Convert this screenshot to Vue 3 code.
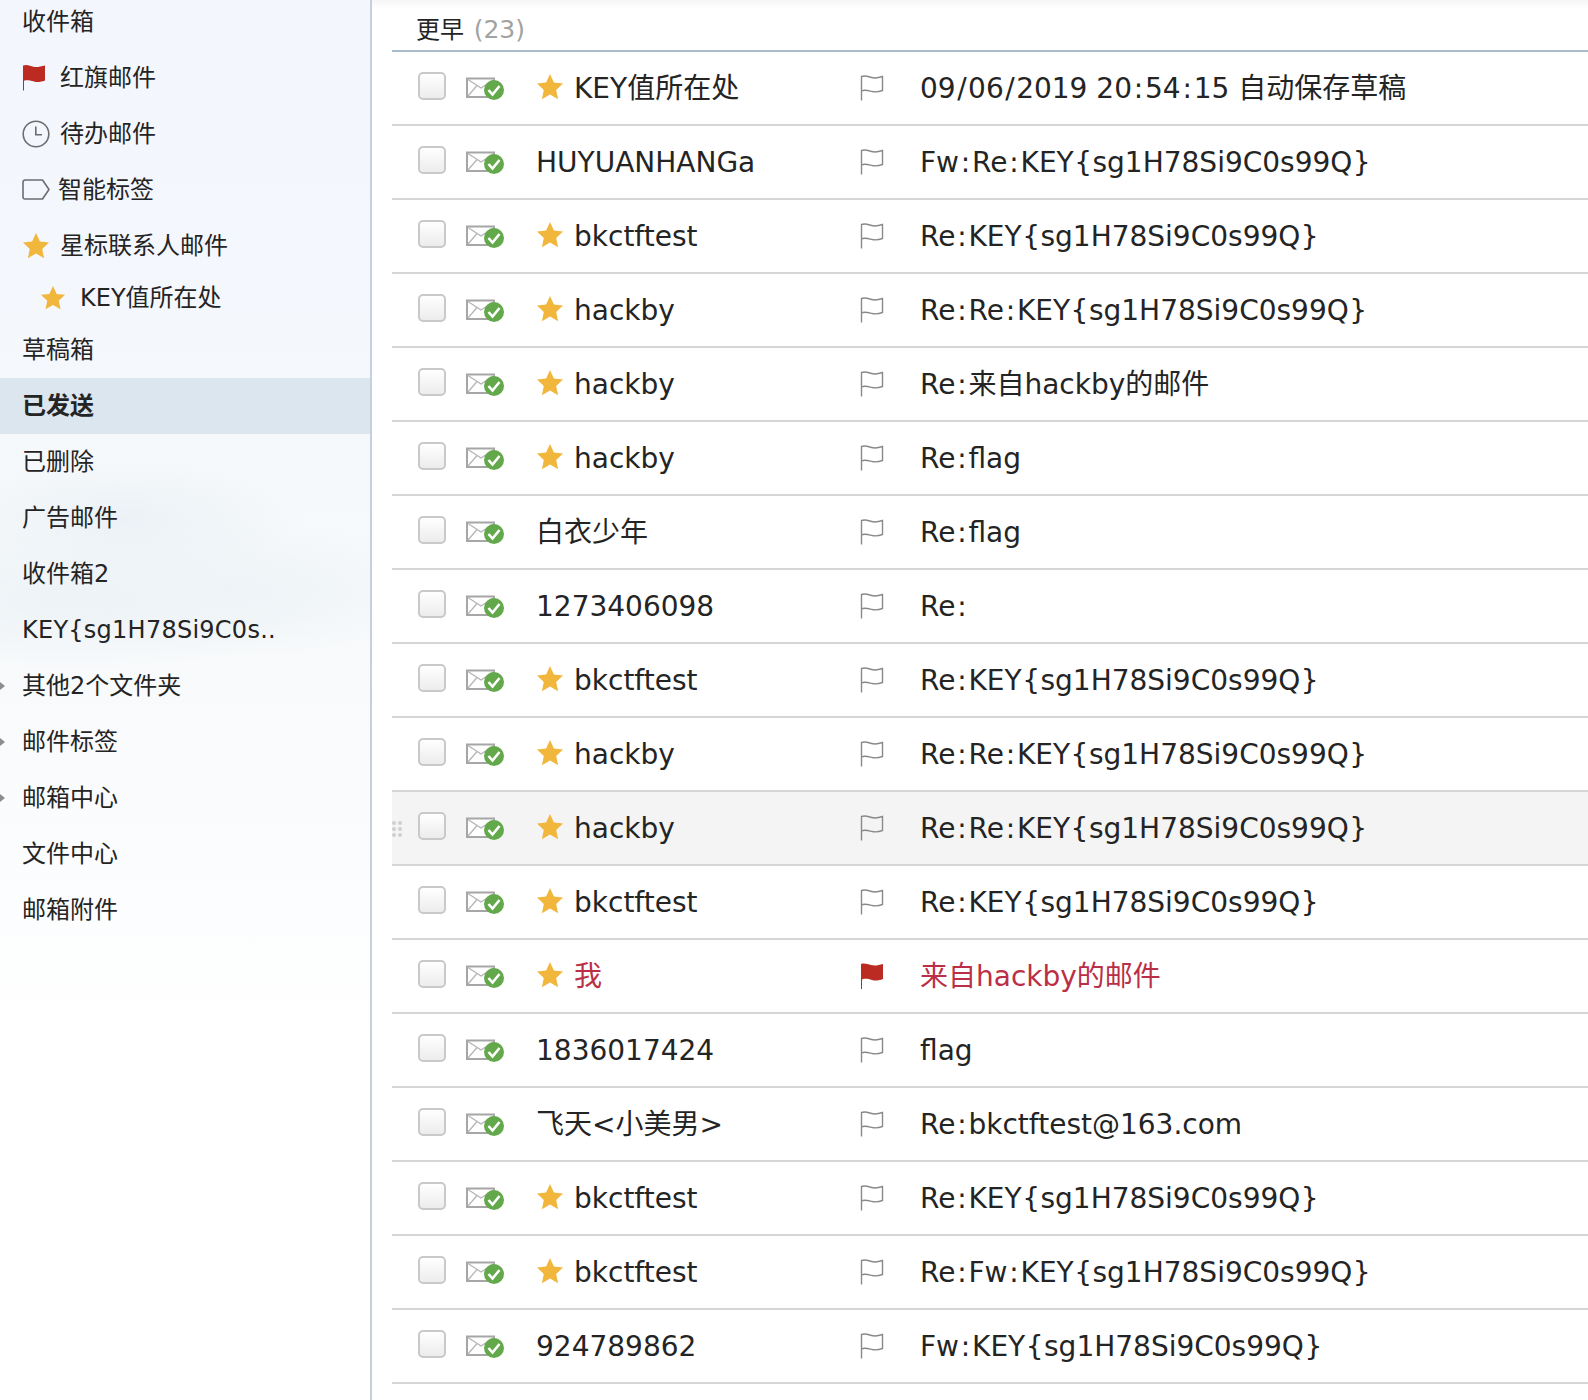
<script setup>
const S = 'Re:KEY{sg1H78Si9C0s99Q}'
const RR = 'Re:Re:KEY{sg1H78Si9C0s99Q}'
const folders = [
  { t: '收件箱' },
  { t: '红旗邮件', icon: 'flag' },
  { t: '待办邮件', icon: 'clock' },
  { t: '智能标签', icon: 'tag' },
  { t: '星标联系人邮件', icon: 'star' },
  { t: 'KEY值所在处', icon: 'star', child: true },
  { t: '草稿箱' },
  { t: '已发送', active: true },
  { t: '已删除' },
  { t: '广告邮件' },
  { t: '收件箱2' },
  { t: 'KEY{sg1H78Si9C0s..', wide: true },
  { t: '其他2个文件夹', arrow: true },
  { t: '邮件标签', arrow: true },
  { t: '邮箱中心', arrow: true },
  { t: '文件中心' },
  { t: '邮箱附件' }
]
const mails = [
  { n: 'KEY值所在处', s: '09/06/2019 20:54:15 自动保存草稿', star: true },
  { n: 'HUYUANHANGa', s: 'Fw:' + S },
  { n: 'bkctftest', s: S, star: true },
  { n: 'hackby', s: RR, star: true },
  { n: 'hackby', s: 'Re:来自hackby的邮件', star: true },
  { n: 'hackby', s: 'Re:flag', star: true },
  { n: '白衣少年', s: 'Re:flag' },
  { n: '1273406098', s: 'Re:' },
  { n: 'bkctftest', s: S, star: true },
  { n: 'hackby', s: RR, star: true },
  { n: 'hackby', s: RR, star: true, hover: true },
  { n: 'bkctftest', s: S, star: true },
  { n: '我', s: '来自hackby的邮件', star: true, red: true },
  { n: '1836017424', s: 'flag' },
  { n: '飞天<小美男>', s: 'Re:bkctftest@163.com' },
  { n: 'bkctftest', s: S, star: true },
  { n: 'bkctftest', s: 'Re:Fw:KEY{sg1H78Si9C0s99Q}', star: true },
  { n: '924789862', s: 'Fw:KEY{sg1H78Si9C0s99Q}' }
]
const parts = s => s.split(/([:{}\/])/).filter(Boolean)
const punctClass = p => ({ ':': 'colon', '{': 'brace', '}': 'brace', '/': 'slash' }[p])
const starPath = 'M14 1l3.900 8.600 9.100 1-6.800 6.300 1.900 9.300L14 21.500 5.900 26.200l1.900-9.300L1 10.600l9.100-1z'
</script>

<template>
  <div class="page">
    <aside class="side">
      <div
        v-for="f in folders"
        :key="f.t"
        class="folder"
        :class="{ active: f.active, child: f.child, tagged: f.icon === 'tag', wide: f.wide }"
      >
        <i v-if="f.arrow" class="arrow"></i>
        <svg v-if="f.icon === 'flag'" class="ficon" viewBox="0 0 28 28">
          <path d="M1 1.500c4-1.500 7 .2 10.500 1.200 3.500 1 6.500 0 11.500-1.200v15c-4 1.500-7.500 2-11 1-3-.9-6.500-1.800-10-.8v9.800H1z" fill="#bb2b22"/>
        </svg>
        <svg v-else-if="f.icon === 'clock'" class="ficon" viewBox="0 0 28 28">
          <circle cx="14" cy="14" r="12.800" fill="none" stroke="#6d6d70" stroke-width="1.600"/>
          <path d="M13.800 6.500v8.300h6.200" fill="none" stroke="#6d6d70" stroke-width="1.600"/>
        </svg>
        <svg v-else-if="f.icon === 'tag'" class="ficon" viewBox="0 0 28 28">
          <path d="M3 4.500h17.500l6.500 9.500-6.500 9.500H3a2 2 0 0 1-2-2v-15a2 2 0 0 1 2-2z" fill="none" stroke="#6d6d70" stroke-width="1.600" stroke-linejoin="round" transform="translate(0 -.5)"/>
        </svg>
        <svg v-else-if="f.icon === 'star'" class="ficon" viewBox="0 0 28 28">
          <path :d="starPath" fill="#f0b73c"/>
        </svg>
        <span class="ftext">{{ f.t }}</span>
      </div>
    </aside>

    <main class="main">
      <div class="group">更早 <em>(23)</em></div>
      <div v-for="(m, i) in mails" :key="i" class="row" :class="{ hover: m.hover, red: m.red }">
        <div v-if="m.hover" class="grip"><b v-for="d in 6" :key="d"></b></div>
        <div class="check"></div>
        <svg class="mailicon" viewBox="0 0 38 24">
          <path d="M1 2.500h27v18.500H1z" fill="#fff" stroke="#a6a6a6" stroke-width="2"/>
          <path d="M2 3.500l13 8.500 13-8.500M2 20l9-10.500M28 20l-9-10.500" fill="none" stroke="#b4b4b4" stroke-width="1.200"/>
          <circle cx="28" cy="14" r="10" fill="#63a94c"/>
          <path d="M22.500 14l4 4.500 7-8.500" fill="none" stroke="#fff" stroke-width="2.600"/>
        </svg>
        <div class="name">
          <svg v-if="m.star" class="rstar" viewBox="0 0 28 28"><path :d="starPath" fill="#f0b73c"/></svg>
          <span class="ntext">{{ m.n }}</span>
        </div>
        <svg class="rflag" viewBox="0 0 24 28">
          <path v-if="m.red" d="M1 3c3.500-1.200 6.500.2 10 1.100 4 1 7.500.2 12-1.100v15c-4 1.500-7.500 2-11 1-3.500-.9-6.500-1.700-10-.6v9.600H1z" fill="#bb2b22"/>
          <path v-else d="M1.500 27.500V3.500c3.500-1.400 6.500 0 10 1 3.700 1 7 .4 11-1v14c-4 1.500-7 1.900-11 .9-3.500-.9-6.500-1.900-10-.6" fill="none" stroke="#88898b" stroke-width="1.400"/>
        </svg>
        <div class="subject"><template v-for="(p, j) in parts(m.s)" :key="j"><span v-if="punctClass(p)" :class="punctClass(p)">{{ p }}</span><template v-else>{{ p }}</template></template></div>
      </div>
    </main>
  </div>
</template>

<style>
html, body { margin: 0; background: #fff; }
</style>

<style scoped>
.page {
  display: flex;
  height: 1400px;
  overflow: hidden;
  font-family: "DejaVu Sans", "Noto Sans CJK SC", sans-serif;
  color: #242424;
}
.side {
  flex: 0 0 370px;
  border-right: 2px solid #c5d0dc;
  background:
    radial-gradient(ellipse 180px 60px at 120px 520px, rgba(232, 239, 244, .8), transparent),
    radial-gradient(ellipse 220px 70px at 230px 590px, rgba(236, 242, 246, .8), transparent),
    radial-gradient(ellipse 260px 70px at 70px 600px, rgba(232, 239, 244, .7), transparent),
    linear-gradient(#f3f6fc 0, #f4f7fc 320px, #f6f9fb 480px, #f8fafb 700px, #fcfdfe 900px, #fff 1040px);
}
.folder {
  position: relative;
  display: flex;
  align-items: center;
  height: 56px;
  padding-left: 22px;
  font-size: 24px;
}
.ftext { line-height: 30px; }
.folder.wide { letter-spacing: .25px; }
.folder:first-child { margin-top: -6px; }
.folder.child { height: 48px; padding-left: 40px; }
.folder.active { background: #dbe6ef; font-weight: 700; }
.ficon { width: 28px; height: 28px; flex: none; margin-right: 10px; }
.folder.tagged .ficon { margin-right: 8px; }
.folder.child .ficon { width: 26px; height: 26px; margin: 0 14px 0 0; }
.arrow {
  position: absolute;
  left: 0;
  top: 24px;
  border-left: 5px solid #8d8d8d;
  border-top: 4px solid transparent;
  border-bottom: 4px solid transparent;
}
.main {
  flex: 1;
  min-width: 0;
  padding-left: 20px;
  background: linear-gradient(#f6f6f6 0, #fff 9px) no-repeat;
}
.group {
  height: 50px;
  box-sizing: content-box;
  border-bottom: 2px solid #a9bccd;
  padding-left: 24px;
  font-size: 24px;
  line-height: 60px;
}
.group em { font-style: normal; color: #a2a2a2; font-size: 25px; margin-left: 2px; }
.row {
  position: relative;
  display: grid;
  grid-template-columns: 28px 20px 38px 33px 323px 60px 1fr;
  grid-template-rows: 72px;
  align-items: center;
  height: 74px;
  box-sizing: border-box;
  border-bottom: 2px solid #d6d6d6;
  padding-left: 26px;
  font-size: 28px;
  line-height: 34px;
  white-space: nowrap;
}
.row.hover { background: #f4f4f4; }
.grip {
  position: absolute;
  left: 0;
  top: 29px;
  display: grid;
  grid-template-columns: 4px 4px;
  gap: 2px;
}
.grip b { width: 4px; height: 4px; border-radius: 50%; background: #cfcfcf; }
.check {
  grid-column: 1;
  grid-row: 1;
  width: 28px;
  height: 28px;
  box-sizing: border-box;
  margin-bottom: 4px;
  border: 2px solid #c9c9c9;
  border-radius: 5px;
  background: linear-gradient(#fff, #ececec);
}
.mailicon { grid-column: 3; grid-row: 1; width: 38px; height: 24px; }
.name { grid-column: 5; grid-row: 1; display: flex; align-items: center; margin-left: -1px; }
.ntext { padding-top: 2px; }
.rstar { width: 28px; height: 28px; margin-right: 10px; margin-bottom: 2px; }
.rflag { grid-column: 6; grid-row: 1; width: 24px; height: 28px; margin-bottom: 2px; }
.subject { grid-column: 7; grid-row: 1; padding-top: 2px; }
.colon { margin: 0 1.8px; }
.brace { margin: 0 .5px; }
.slash { margin: 0 1.5px; }
.row.red .ntext, .row.red .subject { color: #bb2f46; }
</style>
